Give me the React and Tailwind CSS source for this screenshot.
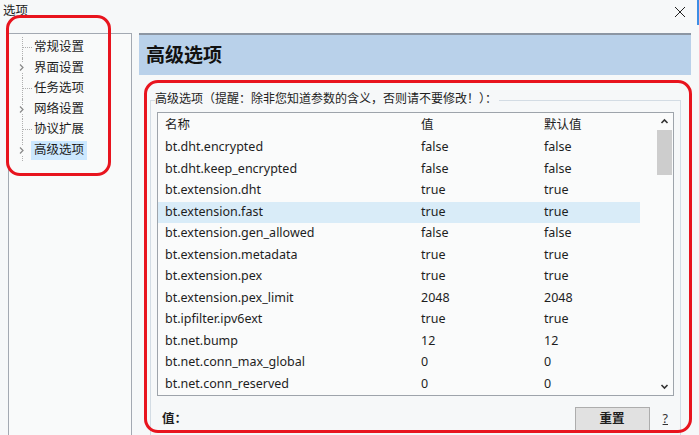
import React from 'react';

const treeItems = [
  { label: '常规设置', expand: false },
  { label: '界面设置', expand: true },
  { label: '任务选项', expand: false },
  { label: '网络设置', expand: true },
  { label: '协议扩展', expand: false },
  { label: '高级选项', expand: true, selected: true },
];

const rows = [
  ['bt.dht.encrypted', 'false', 'false'],
  ['bt.dht.keep_encrypted', 'false', 'false'],
  ['bt.extension.dht', 'true', 'true'],
  ['bt.extension.fast', 'true', 'true'],
  ['bt.extension.gen_allowed', 'false', 'false'],
  ['bt.extension.metadata', 'true', 'true'],
  ['bt.extension.pex', 'true', 'true'],
  ['bt.extension.pex_limit', '2048', '2048'],
  ['bt.ipfilter.ipv6ext', 'true', 'true'],
  ['bt.net.bump', '12', '12'],
  ['bt.net.conn_max_global', '0', '0'],
  ['bt.net.conn_reserved', '0', '0'],
];

const Chevron = ({ dir }) => (
  <svg width="9" height="9" viewBox="0 0 9 9" fill="none" stroke="#333" strokeWidth="1.6">
    {dir === 'right' && <path d="M3 1.5 L6 4.5 L3 7.5" stroke="#888" strokeWidth="1.2" />}
    {dir === 'up' && <path d="M1.5 6 L4.5 3 L7.5 6" />}
    {dir === 'down' && <path d="M1.5 3 L4.5 6 L7.5 3" />}
  </svg>
);

const App = () => {
  return (
    <div
      className="relative w-[699px] h-[435px] overflow-hidden bg-[#f6f8f9] text-[#1e1e1e] flex flex-col"
      style={{ fontFamily: '"Noto Sans", "Noto Sans CJK SC", sans-serif' }}
    >
      {/* title bar */}
      <div className="h-[33px] shrink-0 flex items-start justify-between">
        <span className="text-[12.5px] leading-none pl-[3px] pt-[5px]">选项</span>
        <div className="flex items-start">
          <svg width="12" height="12" viewBox="0 0 12 12" className="mt-[6px] mr-[11px]" stroke="#222" strokeWidth="1">
            <path d="M1 1 L11 11 M11 1 L1 11" />
          </svg>
          <div className="w-[2px] h-[25px] bg-[#3d8ee6]"></div>
        </div>
      </div>

      <div className="flex flex-1 min-h-0">
        {/* tree panel */}
        <div className="ml-[8px] w-[124px] h-full border-l border-r border-t border-[#a3a9b2] bg-[#f9fafa] pt-[3px]">
          {treeItems.map((item, i) => (
            <div key={i} className="flex items-center h-[20.6px]">
              <div className="relative w-[16px] h-full ml-[6px] flex items-center">
                <div className="absolute left-[7px] top-0 bottom-0 border-l border-dotted border-[#b0b0b0]"></div>
                {item.expand ? (
                  <div className="relative bg-[#f9fafa] ml-[2px]">
                    <Chevron dir="right" />
                  </div>
                ) : (
                  <div className="absolute left-[8px] w-[9px] border-t border-dotted border-[#b0b0b0]"></div>
                )}
              </div>
              <span
                className={`text-[12.5px] leading-none px-[3px] py-[3px] ${
                  item.selected ? 'bg-[#cce8ff]' : ''
                }`}
              >
                {item.label}
              </span>
            </div>
          ))}
        </div>

        {/* right side */}
        <div className="ml-[7px] w-[552px] flex flex-col">
          <div className="h-[42px] shrink-0 bg-[#b9d1ea] border-t-[2px] border-[#8c96a3] flex items-center pl-[7px]">
            <span className="text-[19px] font-bold leading-none text-[#111]">高级选项</span>
          </div>

          {/* group box */}
          <div className="relative mt-[25px] ml-[11px] w-[531px] flex-1 border border-[#d3dce4] border-b-0">
            <span className="absolute -top-[8px] left-[4px] bg-[#f6f8f9] text-[12px] leading-none pr-[2px]">
              高级选项（提醒：除非您知道参数的含义，否则请不要修改！）：
            </span>

            {/* list view */}
            <div className="mt-[11px] ml-[6px] w-[517px] h-[284px] border border-[#9ea4ab] bg-[#fafbfb] flex">
              <div className="flex-1 flex flex-col">
                <div className="h-[24px] shrink-0 flex items-center text-[12.5px]">
                  <span className="w-[263px] pl-[7px]">名称</span>
                  <span className="w-[123px]">值</span>
                  <span>默认值</span>
                </div>
                {rows.map((r, i) => (
                  <div
                    key={i}
                    className={`h-[21.5px] flex items-center text-[12.5px] ${
                      i === 3 ? 'bg-[#d9ecf8] mr-[16px]' : ''
                    }`}
                  >
                    <span className="w-[263px] pl-[7px]">{r[0]}</span>
                    <span className="w-[123px]">{r[1]}</span>
                    <span>{r[2]}</span>
                  </div>
                ))}
              </div>
              {/* scrollbar */}
              <div className="w-[17px] shrink-0 flex flex-col items-center">
                <div className="h-[17px] flex items-center justify-center">
                  <Chevron dir="up" />
                </div>
                <div className="w-[15px] h-[45px] bg-[#cdcdcd]"></div>
                <div className="flex-1"></div>
                <div className="h-[17px] flex items-center justify-center">
                  <Chevron dir="down" />
                </div>
              </div>
            </div>

            {/* bottom */}
            <div className="flex items-center mt-[11px] ml-[11px] h-[24px]">
              <span className="text-[12.5px] font-bold">值：</span>
              <div className="flex-1"></div>
              <div className="w-[75px] h-[24px] bg-[#e1e1e1] border border-[#adadad] flex items-center justify-center text-[12.5px] font-bold">
                重置
              </div>
              <span className="ml-[13px] mr-[12px] text-[12.5px] underline text-[#333]">?</span>
            </div>
          </div>
        </div>
      </div>

      {/* red annotation marks */}
      <div className="pointer-events-none absolute left-[6px] top-[15px] w-[105px] h-[161px] border-[3px] border-[#e8141e] rounded-[14px]"></div>
      <div className="pointer-events-none absolute left-[144px] top-[80px] w-[548px] h-[353px] border-[3px] border-[#e8141e] rounded-[14px]"></div>
    </div>
  );
};

export default App;
